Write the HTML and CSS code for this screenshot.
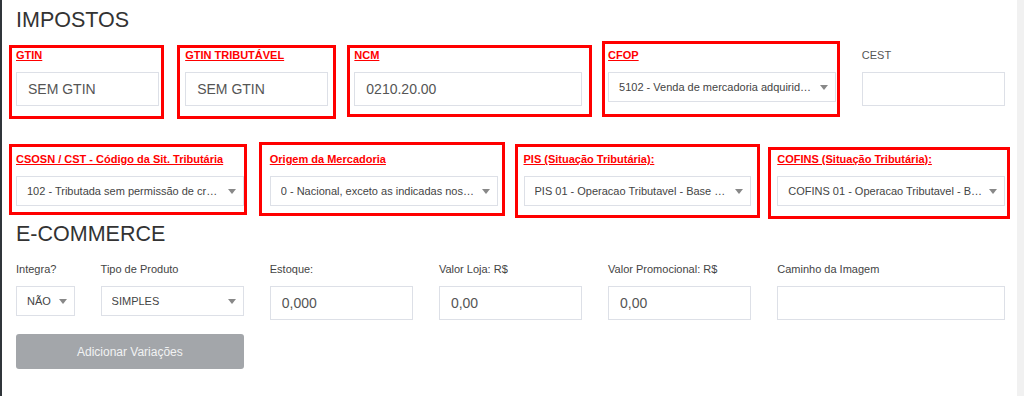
FILE: index.html
```html
<!DOCTYPE html>
<html lang="pt-BR">
<head>
    <meta charset="UTF-8">
    <meta name="viewport" content="width=device-width, initial-scale=1.0">
    <title>Produto - Impostos</title>
    <link rel="stylesheet" href="styles.css">
</head>
<body>
    <div class="layout">
        <main class="page">
            <h2 class="section-title">IMPOSTOS</h2>

            <!-- Impostos: linha 1 -->
            <div class="form-row taxes-top">
                <div class="field span-2 mark mark-gtin">
                    <label class="required">GTIN</label>
                    <input class="text-input" type="text" value="SEM GTIN">
                </div>
                <div class="field span-2 mark mark-gtin-trib">
                    <label class="required">GTIN TRIBUTÁVEL</label>
                    <input class="text-input" type="text" value="SEM GTIN">
                </div>
                <div class="field span-3 mark mark-ncm">
                    <label class="required">NCM</label>
                    <input class="text-input" type="text" value="0210.20.00">
                </div>
                <div class="field span-3 mark mark-cfop">
                    <label class="required">CFOP</label>
                    <div class="select">
                        <span class="select-value">5102 - Venda de mercadoria adquirida ou recebida de terceiros</span>
                        <span class="select-arrow"></span>
                    </div>
                </div>
                <div class="field span-2">
                    <label class="plain">CEST</label>
                    <input class="text-input" type="text" value="">
                </div>
            </div>

            <!-- Impostos: linha 2 -->
            <div class="form-row taxes-bottom">
                <div class="field span-3 mark mark-csosn">
                    <label class="required">CSOSN / CST - Código da Sit. Tributária</label>
                    <div class="select">
                        <span class="select-value">102 - Tributada sem permissão de crédito</span>
                        <span class="select-arrow"></span>
                    </div>
                </div>
                <div class="field span-3 mark mark-origem">
                    <label class="required">Origem da Mercadoria</label>
                    <div class="select">
                        <span class="select-value">0 - Nacional, exceto as indicadas nos códigos 3, 4, 5 e 8</span>
                        <span class="select-arrow"></span>
                    </div>
                </div>
                <div class="field span-3 mark mark-pis">
                    <label class="required">PIS (Situação Tributária):</label>
                    <div class="select">
                        <span class="select-value">PIS 01 - Operacao Tributavel - Base de Calculo = Valor da Operacao</span>
                        <span class="select-arrow"></span>
                    </div>
                </div>
                <div class="field span-3 mark mark-cofins">
                    <label class="required">COFINS (Situação Tributária):</label>
                    <div class="select">
                        <span class="select-value">COFINS 01 - Operacao Tributavel - Base de Calculo = Valor da Operacao</span>
                        <span class="select-arrow"></span>
                    </div>
                </div>
            </div>

            <h2 class="section-title ecommerce">E-COMMERCE</h2>

            <div class="form-row ecommerce-row">
                <div class="field span-1">
                    <label>Integra?</label>
                    <div class="select">
                        <span class="select-value">NÃO</span>
                        <span class="select-arrow"></span>
                    </div>
                </div>
                <div class="field span-2">
                    <label>Tipo de Produto</label>
                    <div class="select">
                        <span class="select-value">SIMPLES</span>
                        <span class="select-arrow"></span>
                    </div>
                </div>
                <div class="field span-2">
                    <label>Estoque:</label>
                    <input class="text-input" type="text" value="0,000">
                </div>
                <div class="field span-2">
                    <label>Valor Loja: R$</label>
                    <input class="text-input" type="text" value="0,00">
                </div>
                <div class="field span-2">
                    <label>Valor Promocional: R$</label>
                    <input class="text-input" type="text" value="0,00">
                </div>
                <div class="field span-3">
                    <label>Caminho da Imagem</label>
                    <input class="text-input" type="text" value="">
                </div>
            </div>

            <div class="form-row actions">
                <button class="btn-variations span-3" type="button">Adicionar Variações</button>
            </div>
        </main>
        <div class="scroll-track"></div>
    </div>
</body>
</html>
```

FILE: styles.css
```css
* {
    box-sizing: border-box;
}
body {
    margin: 0;
    font-family: 'Liberation Sans', Arial, sans-serif;
    background: #fff;
    color: #444;
}
.layout {
    display: flex;
    height: 396px;
    overflow: hidden;
}
.page {
    flex: 1;
    border-left: 2px solid #30353a;
    padding: 8px 12px 0 14px;
}
.scroll-track {
    width: 7px;
    background: #f1f1f1;
}
.section-title {
    margin: 0;
    font-size: 21.5px;
    font-weight: normal;
    line-height: 24px;
    color: #333;
}
.section-title.ecommerce {
    margin-top: 16px;
}
.form-row {
    display: grid;
    grid-template-columns: repeat(12, 1fr);
    column-gap: 26px;
}
.taxes-top {
    margin-top: 16px;
}
.taxes-bottom {
    margin-top: 46px;
}
.ecommerce-row {
    margin-top: 16px;
}
.actions {
    margin-top: 14px;
}
.span-1 { grid-column: span 1; }
.span-2 { grid-column: span 2; }
.span-3 { grid-column: span 3; }

.field {
    position: relative;
    min-width: 0;
}
.field label {
    display: block;
    font-size: 11px;
    line-height: 15px;
    margin-bottom: 9px;
    color: #444;
    white-space: nowrap;
}
.field label.plain {
    color: #555;
}
.field label.required {
    color: #f00;
    font-weight: bold;
    text-decoration: underline;
}
.text-input {
    display: block;
    width: 100%;
    height: 34px;
    border: 1px solid #dde0e7;
    padding: 0 11px;
    font: 14px 'Liberation Sans', Arial, sans-serif;
    color: #555;
    background: #fff;
    outline: none;
}
.select {
    display: flex;
    align-items: center;
    height: 30px;
    border: 1px solid #dde0e7;
    padding: 0 7px 0 10px;
    font-size: 11px;
    color: #444;
    background: #fff;
}
.select-value {
    flex: 1;
    min-width: 0;
    white-space: nowrap;
    overflow: hidden;
    text-overflow: ellipsis;
}
.select-arrow {
    flex: none;
    margin-left: 6px;
    border-style: solid;
    border-width: 5px 4px 0 4px;
    border-color: #888 transparent transparent transparent;
}

/* marcações vermelhas por cima dos campos */
.mark::after {
    content: "";
    position: absolute;
    border: 3px solid #f00;
    pointer-events: none;
}
.mark-gtin::after { inset: -3px -5px -13px -7px; }
.mark-gtin-trib::after { inset: -3px -8px -13px -8px; }
.mark-ncm::after { inset: -3px -10px -11px -7px; }
.mark-cfop::after { inset: -7px -4px -11px -6px; }
.mark-csosn::after { inset: -8px -3px -9px -7px; }
.mark-origem::after { inset: -10px -7px -10px -11px; }
.mark-pis::after { inset: -8px -9px -12px -9px; }
.mark-cofins::after { inset: -5px -5px -13px -9px; }

.btn-variations {
    height: 35px;
    border: none;
    border-radius: 3px;
    background: #a3a6aa;
    color: #f1f2f3;
    font: 12px 'Liberation Sans', Arial, sans-serif;
    cursor: default;
}
```
